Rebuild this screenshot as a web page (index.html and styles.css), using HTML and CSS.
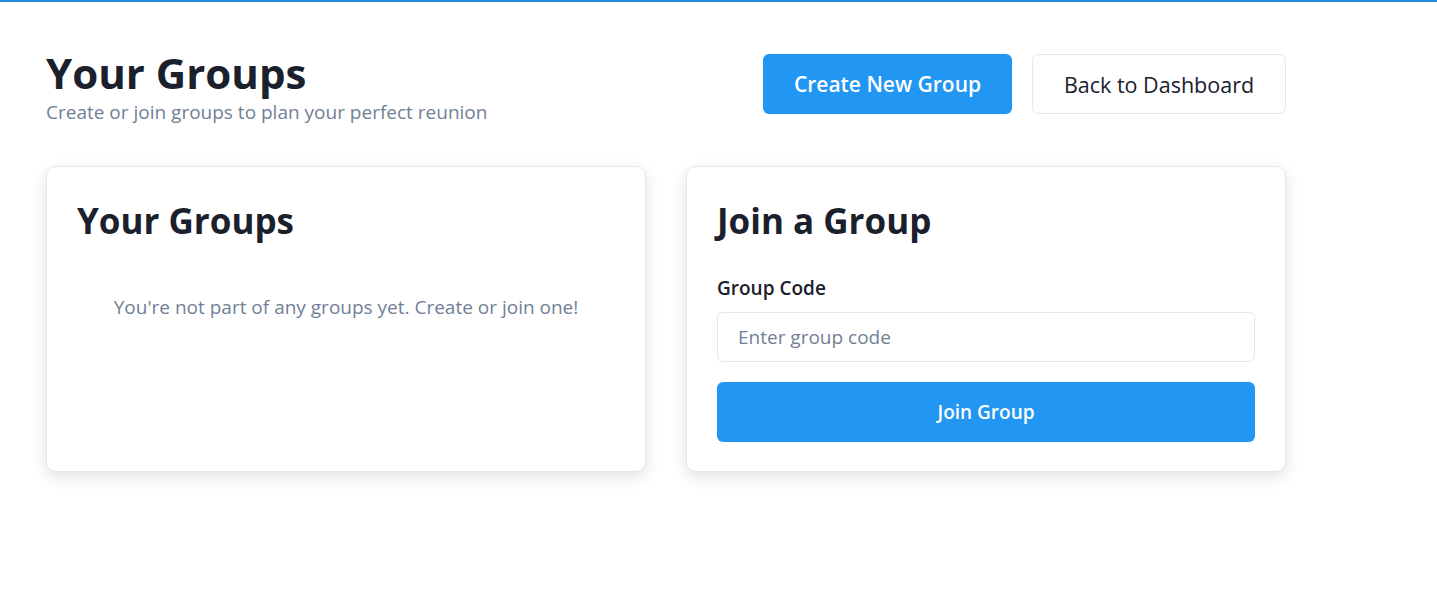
FILE: index.html
```html
<!DOCTYPE html>
<html lang="en">
<head>
<meta charset="utf-8">
<title>Your Groups</title>
<link rel="stylesheet" href="styles.css">
</head>
<body>
<div class="topbar"></div>
<main class="page">
  <header class="page-header">
    <div class="titles">
      <h1 class="page-title">Your Groups</h1>
      <p class="page-sub">Create or join groups to plan your perfect reunion</p>
    </div>
    <div class="actions">
      <button class="btn btn-primary">Create New Group</button>
      <button class="btn btn-outline">Back to Dashboard</button>
    </div>
  </header>
  <section class="grid">
    <div class="card">
      <h2 class="card-title">Your Groups</h2>
      <p class="empty">You're not part of any groups yet. Create or join one!</p>
    </div>
    <div class="card">
      <h2 class="card-title">Join a Group</h2>
      <label class="label" for="code">Group Code</label>
      <input id="code" class="input" type="text" placeholder="Enter group code">
      <button class="btn btn-primary btn-block">Join Group</button>
    </div>
  </section>
</main>
</body>
</html>
```

FILE: styles.css
```css
* { box-sizing: border-box; }
html, body { margin: 0; padding: 0; }
body {
  font-family: "Open Sans", "Noto Sans", sans-serif;
  color: #1a202c;
  background: #fff;
  min-height: 100vh;
}
.topbar { height: 2px; background: #2a8be0; }
.page {
  width: 1240px;
  margin-left: 46px;
  padding-top: 45px;
  padding-bottom: 80px;
}
.page-header {
  display: flex;
  justify-content: space-between;
  align-items: flex-start;
}
.page-title {
  margin: 0;
  font-size: 42px;
  line-height: 52px;
  font-weight: 700;
}
.page-sub {
  margin: 1px 0 0;
  font-size: 19px;
  line-height: 24px;
  color: #718096;
}
.actions { display: flex; gap: 20px; margin-top: 7px; }
.btn {
  font-family: inherit;
  height: 60px;
  border-radius: 6px;
  font-size: 21px;
  font-weight: 600;
  cursor: pointer;
  padding: 0;
}
.btn-primary { background: #2196f3; color: #fff; border: none; width: 249px; }
.btn-outline { background: #fff; color: #1a202c; border: 1px solid #e2e8f0; width: 254px; font-weight: 500; font-size: 21.5px; }
.grid {
  display: grid;
  grid-template-columns: 600px 600px;
  gap: 40px;
  margin-top: 42px;
  align-items: stretch;
}
.card {
  background: #fff;
  border: 1px solid #e2e8f0;
  border-radius: 10px;
  box-shadow: 0 5px 16px rgba(0,0,0,0.12);
  padding: 32px 30px 29px;
  display: flex;
  flex-direction: column;
}
.card-title {
  margin: 0;
  font-size: 35px;
  line-height: 44px;
  font-weight: 700;
}
.empty {
  margin: 50px 0 0;
  text-align: center;
  font-size: 19px;
  line-height: 28px;
  color: #718096;
}
.label {
  margin-top: 33px;
  font-size: 19px;
  line-height: 24px;
  font-weight: 600;
}
.input {
  margin-top: 12px;
  height: 50px;
  border: 1px solid #e2e8f0;
  border-radius: 6px;
  padding: 0 20px;
  font-family: inherit;
  font-size: 19px;
  color: #1a202c;
  outline: none;
}
.input::placeholder { color: #718096; }
.btn-block { width: 100%; margin-top: 20px; font-size: 19px; }
```
